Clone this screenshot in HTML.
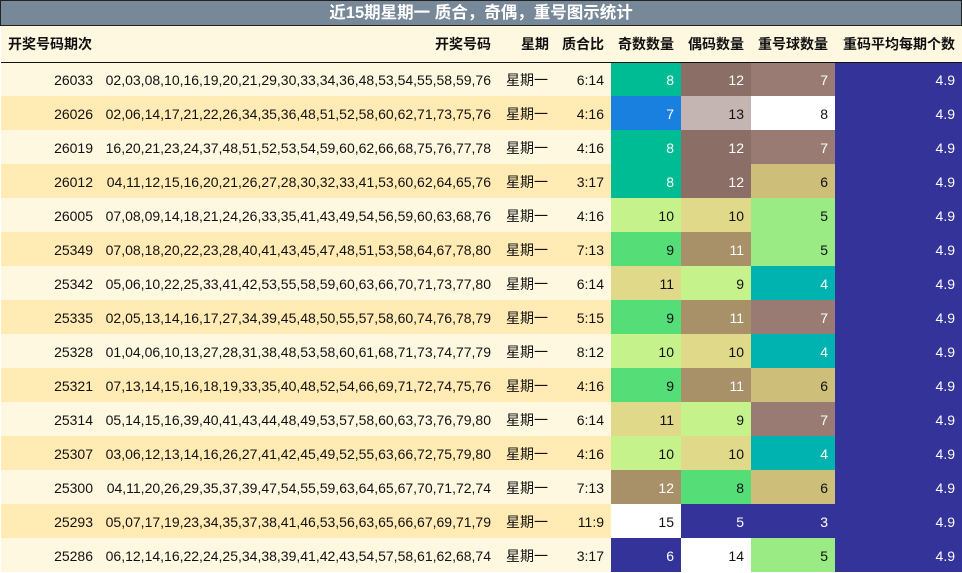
<!DOCTYPE html>
<html><head><meta charset="utf-8"><style>
*{margin:0;padding:0;box-sizing:border-box}
body{width:962px;height:573px;background:#fff;font-family:"Liberation Sans","Noto Sans CJK SC",sans-serif;font-size:14px;color:#111;position:relative;overflow:hidden}
.title{position:absolute;left:0;top:0;width:962px;height:26px;background:#778899;border:1px solid #222;color:#fff;font-size:16.5px;font-weight:bold;text-align:center;line-height:25px}
table{position:absolute;left:1px;top:26px;border-collapse:collapse;table-layout:fixed;width:961px}
td,th{height:34px;padding:0 7px 0 0;text-align:right;white-space:nowrap;overflow:hidden;padding-top:2px}
th{height:36px;background:#FFF8E1;font-weight:bold;border-bottom:1.5px solid #111;font-size:14px;padding-top:0}
tr.a td{background:#FFF8E1}tr.b td{background:#FFEBB3}
td.c{text-align:center;padding:2px 0 0 0}
.w{color:#fff}
</style></head><body>
<div class="title">近15期星期一 质合，奇偶，重号图示统计</div>
<table>
<colgroup><col style="width:99px"><col style="width:398px"><col style="width:58px"><col style="width:55px"><col style="width:70px"><col style="width:70px"><col style="width:84px"><col style="width:127px"></colgroup>
<tr><th style="text-align:left;padding-left:7px">开奖号码期次</th><th>开奖号码</th><th>星期</th><th>质合比</th><th>奇数数量</th><th>偶码数量</th><th>重号球数量</th><th>重码平均每期个数</th></tr>
<tr class="a"><td>26033</td><td>02,03,08,10,16,19,20,21,29,30,33,34,36,48,53,54,55,58,59,76</td><td class="c">星期一</td><td>6:14</td><td class="w" style="background:#00BC94!important">8</td><td class="w" style="background:#8B6E66!important">12</td><td class="w" style="background:#9A7B74!important">7</td><td class="w" style="background:#333399!important">4.9</td></tr>
<tr class="b"><td>26026</td><td>02,06,14,17,21,22,26,34,35,36,48,51,52,58,60,62,71,73,75,76</td><td class="c">星期一</td><td>4:16</td><td class="w" style="background:#1A80E0!important">7</td><td style="background:#C4B5B3!important">13</td><td style="background:#fff!important">8</td><td class="w" style="background:#333399!important">4.9</td></tr>
<tr class="a"><td>26019</td><td>16,20,21,23,24,37,48,51,52,53,54,59,60,62,66,68,75,76,77,78</td><td class="c">星期一</td><td>4:16</td><td class="w" style="background:#00BC94!important">8</td><td class="w" style="background:#8B6E66!important">12</td><td class="w" style="background:#9A7B74!important">7</td><td class="w" style="background:#333399!important">4.9</td></tr>
<tr class="b"><td>26012</td><td>04,11,12,15,16,20,21,26,27,28,30,32,33,41,53,60,62,64,65,76</td><td class="c">星期一</td><td>3:17</td><td class="w" style="background:#00BC94!important">8</td><td class="w" style="background:#8B6E66!important">12</td><td style="background:#CDBE7A!important">6</td><td class="w" style="background:#333399!important">4.9</td></tr>
<tr class="a"><td>26005</td><td>07,08,09,14,18,21,24,26,33,35,41,43,49,54,56,59,60,63,68,76</td><td class="c">星期一</td><td>4:16</td><td style="background:#C6F28C!important">10</td><td style="background:#E0D98A!important">10</td><td style="background:#9AEB84!important">5</td><td class="w" style="background:#333399!important">4.9</td></tr>
<tr class="b"><td>25349</td><td>07,08,18,20,22,23,28,40,41,43,45,47,48,51,53,58,64,67,78,80</td><td class="c">星期一</td><td>7:13</td><td style="background:#55DD78!important">9</td><td class="w" style="background:#A89068!important">11</td><td style="background:#9AEB84!important">5</td><td class="w" style="background:#333399!important">4.9</td></tr>
<tr class="a"><td>25342</td><td>05,06,10,22,25,33,41,42,53,55,58,59,60,63,66,70,71,73,77,80</td><td class="c">星期一</td><td>6:14</td><td style="background:#E0D98A!important">11</td><td style="background:#C6F28C!important">9</td><td class="w" style="background:#00B2B0!important">4</td><td class="w" style="background:#333399!important">4.9</td></tr>
<tr class="b"><td>25335</td><td>02,05,13,14,16,17,27,34,39,45,48,50,55,57,58,60,74,76,78,79</td><td class="c">星期一</td><td>5:15</td><td style="background:#55DD78!important">9</td><td class="w" style="background:#A89068!important">11</td><td class="w" style="background:#9A7B74!important">7</td><td class="w" style="background:#333399!important">4.9</td></tr>
<tr class="a"><td>25328</td><td>01,04,06,10,13,27,28,31,38,48,53,58,60,61,68,71,73,74,77,79</td><td class="c">星期一</td><td>8:12</td><td style="background:#C6F28C!important">10</td><td style="background:#E0D98A!important">10</td><td class="w" style="background:#00B2B0!important">4</td><td class="w" style="background:#333399!important">4.9</td></tr>
<tr class="b"><td>25321</td><td>07,13,14,15,16,18,19,33,35,40,48,52,54,66,69,71,72,74,75,76</td><td class="c">星期一</td><td>4:16</td><td style="background:#55DD78!important">9</td><td class="w" style="background:#A89068!important">11</td><td style="background:#CDBE7A!important">6</td><td class="w" style="background:#333399!important">4.9</td></tr>
<tr class="a"><td>25314</td><td>05,14,15,16,39,40,41,43,44,48,49,53,57,58,60,63,73,76,79,80</td><td class="c">星期一</td><td>6:14</td><td style="background:#E0D98A!important">11</td><td style="background:#C6F28C!important">9</td><td class="w" style="background:#9A7B74!important">7</td><td class="w" style="background:#333399!important">4.9</td></tr>
<tr class="b"><td>25307</td><td>03,06,12,13,14,16,26,27,41,42,45,49,52,55,63,66,72,75,79,80</td><td class="c">星期一</td><td>4:16</td><td style="background:#C6F28C!important">10</td><td style="background:#E0D98A!important">10</td><td class="w" style="background:#00B2B0!important">4</td><td class="w" style="background:#333399!important">4.9</td></tr>
<tr class="a"><td>25300</td><td>04,11,20,26,29,35,37,39,47,54,55,59,63,64,65,67,70,71,72,74</td><td class="c">星期一</td><td>7:13</td><td class="w" style="background:#A89068!important">12</td><td style="background:#55DD78!important">8</td><td style="background:#CDBE7A!important">6</td><td class="w" style="background:#333399!important">4.9</td></tr>
<tr class="b"><td>25293</td><td>05,07,17,19,23,34,35,37,38,41,46,53,56,63,65,66,67,69,71,79</td><td class="c">星期一</td><td>11:9</td><td style="background:#fff!important">15</td><td class="w" style="background:#333399!important">5</td><td class="w" style="background:#333399!important">3</td><td class="w" style="background:#333399!important">4.9</td></tr>
<tr class="a"><td>25286</td><td>06,12,14,16,22,24,25,34,38,39,41,42,43,54,57,58,61,62,68,74</td><td class="c">星期一</td><td>3:17</td><td class="w" style="background:#333399!important">6</td><td style="background:#fff!important">14</td><td style="background:#9AEB84!important">5</td><td class="w" style="background:#333399!important">4.9</td></tr>
</table>
</body></html>
